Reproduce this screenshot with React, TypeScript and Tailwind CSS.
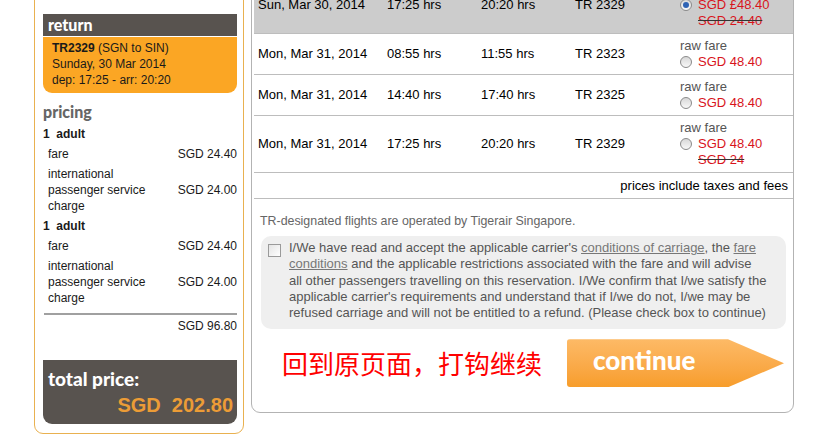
const rows = [
  {
    date: "Sun, Mar 30, 2014",
    dep: "17:25 hrs",
    arr: "20:20 hrs",
    flight: "TR 2329",
    price: "SGD £48.40",
    old: "SGD 24.40",
    selected: true
  },
  { date: "Mon, Mar 31, 2014", dep: "08:55 hrs", arr: "11:55 hrs", flight: "TR 2323", price: "SGD 48.40" },
  { date: "Mon, Mar 31, 2014", dep: "14:40 hrs", arr: "17:40 hrs", flight: "TR 2325", price: "SGD 48.40" },
  {
    date: "Mon, Mar 31, 2014",
    dep: "17:25 hrs",
    arr: "20:20 hrs",
    flight: "TR 2329",
    price: "SGD 48.40",
    old: "SGD 24"
  }
];

function Radio({ checked }: { checked?: boolean }) {
  return (
    <span className="flex h-[12px] w-[12px] shrink-0 items-center justify-center rounded-full border border-[#8a8a8a] bg-gradient-to-b from-[#d8d8d8] to-[#f8f8f8]">
      {checked ? <span className="h-[6px] w-[6px] rounded-full bg-[#2f63b4]" /> : null}
    </span>
  );
}

function ChargeRow({ label, value }: { label: React.ReactNode; value: string }) {
  return (
    <div className="flex items-center justify-between py-[2px] pl-[5px] leading-4">
      <span>{label}</span>
      <span>{value}</span>
    </div>
  );
}

function PricingBlock() {
  return (
    <>
      <div className="py-[2px] font-bold leading-4">1&nbsp; adult</div>
      <ChargeRow label="fare" value="SGD 24.40" />
      <ChargeRow
        label={
          <>
            international
            <br />
            passenger service
            <br />
            charge
          </>
        }
        value="SGD 24.00"
      />
    </>
  );
}

function Summary() {
  return (
    <aside className="-mt-[10px] w-[210px] shrink-0 rounded-[9px] border border-[#e9b150] pb-[9px] pl-[8px] pr-[6px] pt-[23px] text-[12px] text-[#1a1a1a]">
      <div className="flex h-[22px] items-center bg-[#58534f] pl-[5px] font-['Lato',sans-serif] text-[16px] font-black text-white">
        return
      </div>
      <div className="mt-px rounded-b-[9px] bg-[#fba624] px-[9px] pb-[5px] pt-[3px] leading-4 text-[#1a1a1a]">
        <div>
          <b>TR2329</b> (SGN to SIN)
        </div>
        <div>Sunday, 30 Mar 2014</div>
        <div>dep: 17:25 - arr: 20:20</div>
      </div>
      <div className="mt-[9px] font-['Lato',sans-serif] text-[16px] font-black leading-5 text-[#666]">
        pricing
      </div>
      <div className="mt-[2px]">
        <PricingBlock />
        <PricingBlock />
      </div>
      <div className="ml-px mt-[5px] h-[2px] bg-[#a0a0a0]" />
      <div className="mt-[3px] text-right leading-4">SGD 96.80</div>
      <div className="mt-[26px] flex h-[64px] flex-col rounded-b-[9px] bg-[#58534f] pl-[5px] pr-[4px] pt-[9px] font-['Lato',sans-serif] font-black">
        <div className="text-[19px] leading-5 text-white">total price:</div>
        <div className="mt-[4px] text-right font-['Liberation_Sans',sans-serif] text-[20px] font-bold leading-6 text-[#ec9c36]">
          SGD&nbsp; 202.80
        </div>
      </div>
    </aside>
  );
}

function FlightTable() {
  return (
    <div className="ml-[2px] text-[13px] text-black">
      {rows.map((r, i) => (
        <div
          key={i}
          className={`grid grid-cols-[129px_94px_94px_105px_1fr] items-center border-b border-[#bdbdbd] ${
            r.selected ? "bg-[#cccccc]" : ""
          }`}
        >
          <div className="pl-[4px]">{r.date}</div>
          <div className="pl-[4px]">{r.dep}</div>
          <div className="pl-[4px]">{r.arr}</div>
          <div className="pl-[4px]">{r.flight}</div>
          <div className="py-[4px] pl-[4px] leading-4">
            <div className="text-[#555]">raw fare</div>
            <div className="flex items-center gap-[6px] text-[#d8141c]">
              <Radio checked={r.selected} />
              <span>{r.price}</span>
            </div>
            {r.old ? (
              <div className="pl-[18px] text-[#d8141c] line-through decoration-[#333]">{r.old}</div>
            ) : null}
          </div>
        </div>
      ))}
      <div className="flex h-[26px] items-center justify-end border-b border-[#bdbdbd] pr-[5px]">
        prices include taxes and fees
      </div>
    </div>
  );
}

export default function App() {
  return (
    <div className="h-[445px] w-[829px] overflow-hidden bg-white font-['Liberation_Sans',Arial,sans-serif]">
      <div className="flex items-start gap-[7px] pl-[34px]">
        <Summary />
        <main className="-mt-[27px] w-[543px] shrink-0 rounded-[9px] border border-[#b3b3b3] pb-[25px] pt-[3px]">
          <FlightTable />
          <p className="mt-[14px] pl-[8px] text-[12.4px] leading-4 text-[#666]">
            TR-designated flights are operated by Tigerair Singapore.
          </p>
          <div className="ml-[9px] mr-[7px] mt-[7px] flex rounded-[10px] bg-[#efefef] pb-[8px] pl-[7px] pt-[4px] text-[13px] leading-[16.25px] text-[#555]">
            <span className="mt-[4px] h-[13px] w-[13px] shrink-0 border border-[#9a9a9a] bg-gradient-to-br from-[#e4e4e4] to-white" />
            <p className="ml-[8px] whitespace-nowrap">
              I/We have read and accept the applicable carrier's{" "}
              <span className="text-[#777] underline">conditions of carriage</span>, the{" "}
              <span className="text-[#777] underline">fare</span>
              <br />
              <span className="text-[#777] underline">conditions</span> and the applicable restrictions associated
              with the fare and will advise
              <br />
              all other passengers travelling on this reservation. I/We confirm that I/we satisfy the
              <br />
              applicable carrier's requirements and understand that if I/we do not, I/we may be
              <br />
              refused carriage and will not be entitled to a refund. (Please check box to continue)
            </p>
          </div>
          <div className="mt-[10px] flex items-center pl-[30px] pr-[9px]">
            <span className="font-['Noto_Sans_CJK_SC',sans-serif] text-[26px] leading-8 text-[#ff0000]">
              回到原页面，打钩继续
            </span>
            <button className="ml-auto flex h-[48px] w-[217px] items-center rounded-l-[3px] bg-gradient-to-b from-[#fdba66] to-[#f79d2a] pb-[6px] pl-[26px] font-['Lato',sans-serif] text-[26px] font-black text-white [clip-path:polygon(0_0,161px_0,217px_50%,161px_100%,0_100%)]">
              continue
            </button>
          </div>
        </main>
      </div>
    </div>
  );
}
